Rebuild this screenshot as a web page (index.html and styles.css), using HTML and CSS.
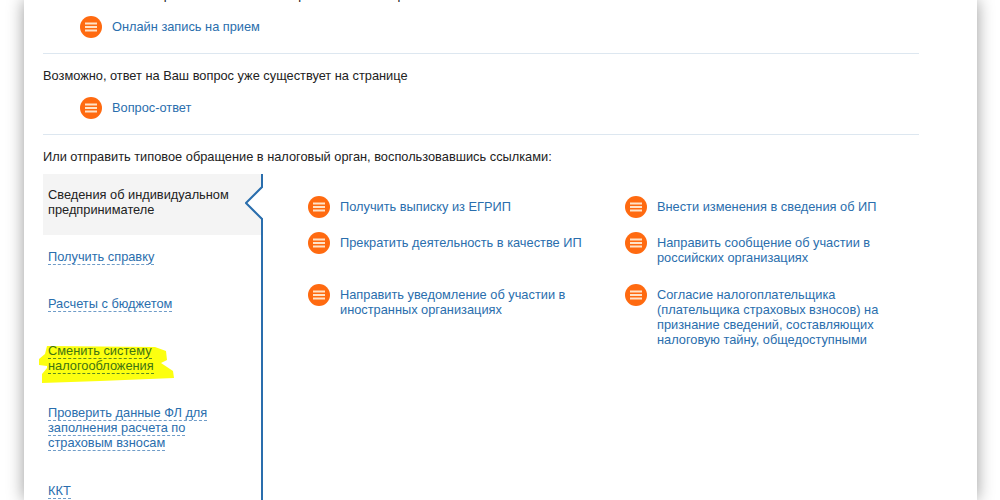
FILE: index.html
```html
<!DOCTYPE html>
<html lang="ru">
<head>
<meta charset="utf-8">
<title>Обращение</title>
<link rel="stylesheet" href="styles.css">
</head>
<body>
<main class="card">
  <p class="lead cut">Вы можете также обратиться лично или через наш сайт и приложение</p>
  <a class="item first-item"><svg class="ic" viewBox="0 0 22 22"><circle cx="11" cy="11" r="11"/><path d="M5 7.5h12M5 11h12M5 14.5h12"/></svg><span>Онлайн запись на прием</span></a>
  <hr class="rule r1">
  <p class="lead">Возможно, ответ на Ваш вопрос уже существует на странице</p>
  <a class="item second-item"><svg class="ic" viewBox="0 0 22 22"><circle cx="11" cy="11" r="11"/><path d="M5 7.5h12M5 11h12M5 14.5h12"/></svg><span>Вопрос-ответ</span></a>
  <hr class="rule r2">
  <p class="lead l3">Или отправить типовое обращение в налоговый орган, воспользовавшись ссылками:</p>
  <section class="tabs">
    <nav class="side">
      <div class="tab active">Сведения об индивидуальном<br>предпринимателе
        <svg class="notch" viewBox="0 0 18 36"><path class="notch-fill" d="M18 2 1 18 18 34Z"/><path class="notch-line" d="M17 0V2L1 18 17 34V36"/></svg>
      </div>
      <a class="tab t2"><span class="dash">Получить справку</span></a>
      <a class="tab t3"><span class="dash">Расчеты с бюджетом</span></a>
      <a class="tab t4 hl"><svg class="marker" viewBox="38 344 136 40"><path d="M47 346 155 347 166 351 167 360 161 363 173 371 174 378 100 381 42 383 42 374 47 368 47 366 39 365 39 359 45 354Z"/></svg><span class="dash rel">Сменить систему</span><br><span class="dash rel">налогообложения</span></a>
      <a class="tab t5"><span class="dash">Проверить данные ФЛ для</span><br><span class="dash">заполнения расчета по</span><br><span class="dash">страховым взносам</span></a>
      <a class="tab t6"><span class="dash">ККТ</span></a>
    </nav>
    <div class="links">
      <a class="link"><svg class="ic" viewBox="0 0 22 22"><circle cx="11" cy="11" r="11"/><path d="M5 7.5h12M5 11h12M5 14.5h12"/></svg><span>Получить выписку из ЕГРИП</span></a>
      <a class="link"><svg class="ic" viewBox="0 0 22 22"><circle cx="11" cy="11" r="11"/><path d="M5 7.5h12M5 11h12M5 14.5h12"/></svg><span>Внести изменения в сведения об ИП</span></a>
      <a class="link"><svg class="ic" viewBox="0 0 22 22"><circle cx="11" cy="11" r="11"/><path d="M5 7.5h12M5 11h12M5 14.5h12"/></svg><span>Прекратить деятельность в качестве ИП</span></a>
      <a class="link"><svg class="ic" viewBox="0 0 22 22"><circle cx="11" cy="11" r="11"/><path d="M5 7.5h12M5 11h12M5 14.5h12"/></svg><span>Направить сообщение об участии в российских организациях</span></a>
      <a class="link"><svg class="ic" viewBox="0 0 22 22"><circle cx="11" cy="11" r="11"/><path d="M5 7.5h12M5 11h12M5 14.5h12"/></svg><span>Направить уведомление об участии в иностранных организациях</span></a>
      <a class="link"><svg class="ic" viewBox="0 0 22 22"><circle cx="11" cy="11" r="11"/><path d="M5 7.5h12M5 11h12M5 14.5h12"/></svg><span>Согласие налогоплательщика (плательщика страховых взносов) на признание сведений, составляющих налоговую тайну, общедоступными</span></a>
    </div>
  </section>
</main>
</body>
</html>
```
FILE: styles.css
```css
html, body { margin: 0; height: 500px; overflow: hidden; background: #fff; }
body { font: 12.8px/15px "Liberation Sans", Arial, sans-serif; color: #222; }
.card { box-sizing: border-box; width: 953px; height: 500px; margin-left: 24px; padding: 0 58px 0 19px; background: #fff; box-shadow: 0 0 16px rgba(0,0,0,.4); overflow: hidden; }
p { margin: 0; }
.lead { height: 15px; }
.cut { margin-top: -13px; }
.item { display: flex; align-items: center; gap: 10px; margin-left: 37px; color: #2a6ead; height: 22px; }
.item span { padding-bottom: 2px; }
.first-item { margin-top: 14px; }
.second-item { margin-top: 14px; }
.ic { width: 22px; height: 22px; flex: none; }
.ic circle { fill: #ff6a10; }
.ic path { stroke: #ffe3c8; stroke-width: 2; fill: none; }
.rule { border: 0; border-top: 1px solid #dde7f0; margin: 0; }
.r1 { margin-top: 15px; margin-bottom: 14px; }
.r2 { margin-top: 15px; margin-bottom: 14px; }
.l3 { margin-bottom: 10px; }
.tabs { display: flex; height: 330px; }
.side { width: 218px; flex: none; border-right: 2px solid #2a6ead; display: flex; flex-direction: column; }
.tab { display: block; padding-left: 5px; color: #2a6ead; }
.active { position: relative; height: 61px; box-sizing: border-box; padding-top: 13px; background: #f4f4f4; color: #222; flex: none; }
.notch { position: absolute; right: -2px; top: 11px; width: 18px; height: 36px; }
.notch-fill { fill: #fff; }
.notch-line { fill: none; stroke: #2a6ead; stroke-width: 2; }
.t2 { margin-top: 14px; }
.t3 { margin-top: 32px; }
.t4 { margin-top: 32px; position: relative; }
.t5 { margin-top: 32px; }
.t6 { margin-top: 33px; }
.dash { border-bottom: 1px dashed #6f9cc8; }
.hl { color: #3f7412; }
.hl .dash { border-bottom-color: #5c8a20; }
.rel { position: relative; }
.marker { position: absolute; left: -5px; top: 1px; width: 136px; height: 40px; overflow: visible; }
.marker path { fill: #fcff10; }
.links { flex: 1; display: grid; grid-template-columns: 317px 1fr; grid-template-rows: 36px 52px auto; padding: 22px 0 0 45px; align-content: start; }
.link { display: flex; align-items: flex-start; gap: 10px; color: #2a6ead; }
.link span { padding-top: 3px; max-width: 245px; }
```
